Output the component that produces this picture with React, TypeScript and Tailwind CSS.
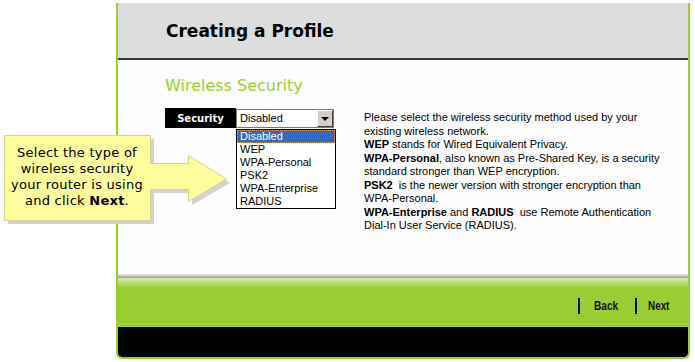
import React from 'react';

const options = ['Disabled', 'WEP', 'WPA-Personal', 'PSK2', 'WPA-Enterprise', 'RADIUS'];

export default function App() {
  return (
    <div className="relative w-[695px] h-[362px] bg-white overflow-hidden">
      {/* Wizard panel */}
      <div className="ml-[116px] mt-[3px] w-[574px] border-x-2 border-b-2 border-[#9acd32] rounded-b-[6px] overflow-hidden">
        <div className="h-[55px] bg-[#dddddd] pl-[48px] pt-[17px]">
          <h1 className="font-['DejaVu_Sans',sans-serif] font-bold text-[17px] leading-[22px] text-black">
            Creating a Profile
          </h1>
        </div>
        <div className="h-[2px] bg-[#3a3a3a]" />

        <div className="h-[214px] bg-[#fdfdfd] pl-[47px] pt-[16px]">
          <h2 className="font-['DejaVu_Sans',sans-serif] text-[16px] leading-[20px] text-[#9acd32]">
            Wireless Security
          </h2>

          <div className="mt-[12px] flex gap-[28px]">
            <div className="w-[171px]">
              <div className="flex">
                <div className="w-[71px] h-[20px] bg-black flex items-center justify-center font-['DejaVu_Sans',sans-serif] font-bold text-[10px] text-white">
                  Security
                </div>
                <div className="mt-[1px] w-[98px] h-[19px] bg-white border border-[#7a7a7a] flex items-center justify-between font-['Liberation_Sans',sans-serif] text-[11px] text-black">
                  <span className="pl-[3px]">Disabled</span>
                  <span className="w-[16px] h-[17px] bg-[#d4d0c8] border border-t-white border-l-white border-r-[#404040] border-b-[#404040] flex items-center justify-center">
                    <span className="w-0 h-0 border-x-[4px] border-x-transparent border-t-[4px] border-t-black" />
                  </span>
                </div>
              </div>
              <ul className="ml-[71px] mt-[1px] w-[100px] border border-black bg-white font-['Liberation_Sans',sans-serif] text-[11px] leading-[13px] text-black">
                {options.map((o, i) => (
                  <li
                    key={o}
                    className={
                      i === 0
                        ? 'h-[13px] pl-[2px] bg-[#316ac5] text-white border border-dotted border-[#e8a040] leading-[11px]'
                        : 'h-[13px] pl-[3px]'
                    }
                  >
                    {o}
                  </li>
                ))}
              </ul>
            </div>

            <div className="mt-[3px] whitespace-nowrap font-['Liberation_Sans',sans-serif] text-[11px] leading-[13.5px] text-black">
              <p>Please select the wireless security method used by your</p>
              <p>existing wireless network.</p>
              <p><b>WEP</b> stands for Wired Equivalent Privacy.</p>
              <p><b>WPA-Personal</b>, also known as Pre-Shared Key, is a security</p>
              <p>standard stronger than WEP encryption.</p>
              <p><b>PSK2</b>&nbsp; is the newer version with stronger encryption than</p>
              <p>WPA-Personal.</p>
              <p><b>WPA-Enterprise</b> and <b>RADIUS</b>&nbsp; use Remote Authentication</p>
              <p>Dial-In User Service (RADIUS).</p>
            </div>
          </div>
        </div>

        <div className="h-[4px] bg-gradient-to-b from-[#ececec] to-[#999999]" />
        <div className="h-[49px] bg-gradient-to-b from-[#d6ecaa] via-[#9acd32] via-20% to-[#9acd32] flex items-center justify-end pt-[6px] pr-[18px] font-['Liberation_Sans',sans-serif] font-bold text-[13px] text-[#111]">
          <span className="w-[2px] h-[16px] bg-black" />
          <span className="ml-[14px] w-[24px] inline-block whitespace-nowrap origin-left scale-x-[0.78]">Back</span>
          <span className="ml-[17px] w-[2px] h-[16px] bg-black" />
          <span className="ml-[11px] w-[22px] inline-block whitespace-nowrap origin-left scale-x-[0.76]">Next</span>
        </div>
        <div className="h-[30px] bg-black rounded-b-[4px]" />
      </div>

      {/* Yellow callout */}
      <div className="absolute left-0 top-0 w-[240px] h-[240px] pointer-events-none">
        <svg width="240" height="240" className="absolute left-0 top-0">
          <path d="M8,139 H154 V167 H192 V159 L230,183 L192,205 V193 H154 V224 H8 Z" fill="#d2d2d2" />
          <path
            d="M4.5,135.5 H150.5 V163.5 H188.5 V155.5 L226.5,179 L188.5,201.5 V189.5 H150.5 V220.5 H4.5 Z"
            fill="#fdfd9e"
            stroke="#d4d48c"
          />
        </svg>
        <div className="absolute left-[4px] top-[145px] w-[146px] text-center font-['DejaVu_Sans',sans-serif] text-[13px] leading-[16px] tracking-[0.25px] text-black">
          <p>Select the type of</p>
          <p>wireless security</p>
          <p>your router is using</p>
          <p>and click <b>Next</b>.</p>
        </div>
      </div>
    </div>
  );
}
